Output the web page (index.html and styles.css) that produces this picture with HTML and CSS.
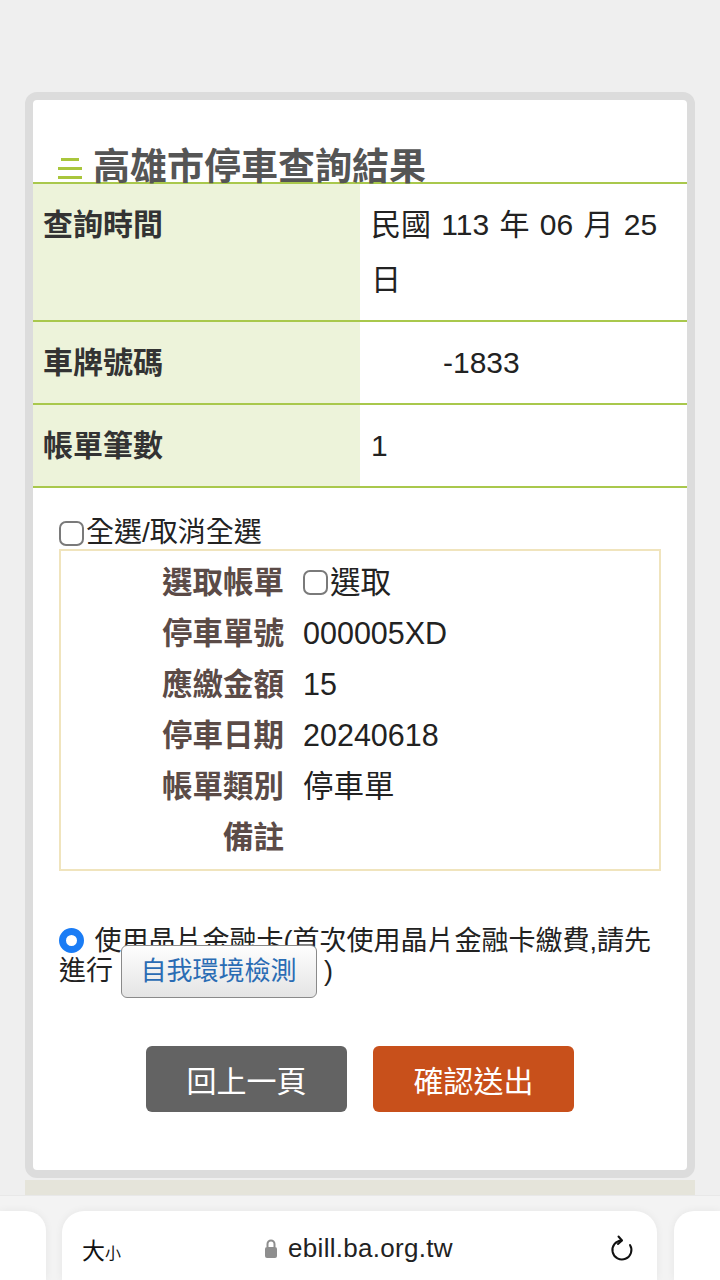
FILE: index.html
```html
<!DOCTYPE html>
<html lang="zh-Hant">
<head>
  <meta charset="UTF-8" />
  <meta name="viewport" content="width=device-width, initial-scale=1.0"/>
  <title>高雄市停車查詢結果</title>
  <link rel="stylesheet" href="styles.css">
</head>
<body>
  <div class="page">
    <div class="card">
      <h1 class="title">
        <svg class="title-icon" width="24" height="26" viewBox="0 0 24 26">
          <rect x="3" y="2" width="18" height="3" fill="#a9c63c"/>
          <rect x="0" y="11" width="24" height="3" fill="#a9c63c"/>
          <rect x="0" y="20" width="24" height="3" fill="#a9c63c"/>
        </svg>
        高雄市停車查詢結果
      </h1>

      <table class="result">
        <tr>
          <th>查詢時間</th>
          <td>民國 113 年 06 月 25 日</td>
        </tr>
        <tr>
          <th>車牌號碼</th>
          <td><span class="mask"></span>-1833</td>
        </tr>
        <tr>
          <th>帳單筆數</th>
          <td>1</td>
        </tr>
      </table>

      <div class="bills">
        <label class="select-all"><span class="check"></span>全選/取消全選</label>

        <div class="bill">
          <div class="bill-label">選取帳單</div>
          <div class="bill-value"><span class="check"></span>選取</div>
          <div class="bill-label">停車單號</div>
          <div class="bill-value">000005XD</div>
          <div class="bill-label">應繳金額</div>
          <div class="bill-value">15</div>
          <div class="bill-label">停車日期</div>
          <div class="bill-value">20240618</div>
          <div class="bill-label">帳單類別</div>
          <div class="bill-value">停車單</div>
          <div class="bill-label">備註</div>
          <div class="bill-value"></div>
        </div>

        <p class="pay-option">
          <span class="radio"></span> 使用晶片金融卡(首次使用晶片金融卡繳費,請先<br>進行 <span class="env-btn">自我環境檢測</span> )
        </p>

        <div class="actions">
          <a class="btn btn-back" href="#">回上一頁</a>
          <a class="btn btn-submit" href="#">確認送出</a>
        </div>
      </div>
    </div>
    <div class="strip"></div>
  </div>

  <!-- safari bottom bar -->
  <div class="browser-bar">
    <div class="side-pill left"></div>
    <div class="url-pill">
      <div class="text-size">大<small>小</small></div>
      <div class="url">
        <svg width="14" height="21" viewBox="0 0 14 21">
          <path d="M3.5 9 V6 a3.5 3.5 0 0 1 7 0 V9" fill="none" stroke="#8e8e8e" stroke-width="2"/>
          <rect x="1" y="9" width="12" height="11" rx="2" fill="#8e8e8e"/>
        </svg>
        <span>ebill.ba.org.tw</span>
      </div>
      <div class="reload">
        <svg width="26" height="30" viewBox="0 0 26 30">
          <path d="M12.5 6.5 A9.5 9.5 0 1 0 21 11" fill="none" stroke="#111" stroke-width="2" stroke-linecap="round"/>
          <path d="M9.5 2.5 L13 6.5 L9 10" fill="none" stroke="#111" stroke-width="2" stroke-linecap="round" stroke-linejoin="round"/>
        </svg>
      </div>
    </div>
    <div class="side-pill right"></div>
  </div>
</body>
</html>
```

FILE: styles.css
```css
* {
  margin: 0;
  padding: 0;
  box-sizing: border-box;
}

html, body {
  height: 100%;
  overflow: hidden;
}

body {
  background: #efefef;
  font-family: "Liberation Sans", "Noto Sans CJK TC", sans-serif;
  color: #222;
}

.page {
  padding: 92px 25px 0;
}

.card {
  background: #fff;
  border: 8px solid #dcdcdc;
  border-radius: 12px;
  height: 1086px;
}

.title {
  display: flex;
  align-items: center;
  gap: 11px;
  padding: 46px 0 0 25px;
  margin-bottom: -8px;
  font-size: 37px;
  line-height: 44px;
  font-weight: bold;
  color: #555;
  position: relative;
  z-index: 1;
}

.title-icon {
  margin-top: 2px;
}

.result {
  width: 100%;
  border-collapse: collapse;
  border-top: 2px solid #a9c84c;
  font-size: 30px;
  line-height: 55px;
}

.result tr {
  border-bottom: 2px solid #a9c84c;
}

.result th {
  width: 327px;
  background: #edf3da;
  text-align: left;
  vertical-align: top;
  padding: 13px 10px;
  color: #333;
  font-weight: bold;
}

.result td {
  vertical-align: top;
  padding: 13px 16px 13px 11px;
  color: #222;
  word-spacing: 2px;
}

.mask {
  display: inline-block;
  width: 72px;
}

.bills {
  padding: 0 26px;
}

.select-all {
  display: flex;
  align-items: center;
  margin-top: 28px;
  font-size: 28px;
  line-height: 34px;
  color: #222;
}

.check {
  display: inline-block;
  width: 25px;
  height: 25px;
  border: 2px solid #7a7a7a;
  border-radius: 7px;
  margin-right: 2px;
  background: #fff;
  flex-shrink: 0;
}

.bill {
  display: grid;
  grid-template-columns: 223px 1fr;
  column-gap: 19px;
  margin-top: -1px;
  padding: 6px 0;
  border: 2px solid #f0e4bd;
  font-size: 30.5px;
  line-height: 51px;
  height: 322px;
}

.bill-label {
  text-align: right;
  font-weight: bold;
  color: #5b4b47;
}

.bill-value {
  display: flex;
  align-items: center;
  color: #222;
}

.pay-option {
  margin-top: 55px;
  font-size: 27px;
  line-height: 30px;
  color: #222;
}

.radio {
  display: inline-block;
  width: 25px;
  height: 25px;
  border-radius: 50%;
  border: 7px solid #1a7cf5;
  background: #fff;
  vertical-align: -3px;
  margin-right: 3px;
}

.env-btn {
  display: inline-block;
  margin: -12px 0;
  padding: 0 19px;
  line-height: 51px;
  font-size: 26px;
  color: #2a6cb4;
  border: 1px solid #8a8a8a;
  border-radius: 6px;
  background: linear-gradient(#fefefe, #e4e4e4);
}

.actions {
  display: flex;
  justify-content: center;
  gap: 26px;
  margin-top: 60px;
}

.btn {
  display: flex;
  align-items: center;
  justify-content: center;
  width: 201px;
  height: 66px;
  border-radius: 6px;
  color: #fff;
  font-size: 30px;
  text-decoration: none;
}

.btn-back {
  background: #636363;
}

.btn-submit {
  background: #c8501b;
}

.strip {
  height: 15px;
  margin-top: 2px;
  background: #e5e4da;
}

.browser-bar {
  display: flex;
  gap: 16px;
  height: 85px;
  padding-top: 15px;
  background: #f3f3f3;
  border-top: 1px solid #e8e8e8;
}

.side-pill {
  width: 46px;
  background: #fff;
  box-shadow: 0 0 8px rgba(0, 0, 0, 0.06);
}

.side-pill.left {
  border-radius: 0 20px 0 0;
}

.side-pill.right {
  margin-left: 1px;
  border-radius: 20px 0 0 0;
}

.url-pill {
  flex: 1;
  display: flex;
  align-items: center;
  padding: 6px 22px 0 20px;
  background: #fff;
  border-radius: 22px 22px 0 0;
  box-shadow: 0 0 8px rgba(0, 0, 0, 0.06);
}

.text-size {
  width: 60px;
  font-size: 23px;
  color: #111;
}

.text-size small {
  font-size: 16px;
}

.url {
  flex: 1;
  display: flex;
  align-items: center;
  justify-content: center;
  gap: 10px;
  font-size: 26px;
  letter-spacing: 0.3px;
  color: #222;
}

.reload {
  width: 60px;
  display: flex;
  justify-content: flex-end;
}
```
